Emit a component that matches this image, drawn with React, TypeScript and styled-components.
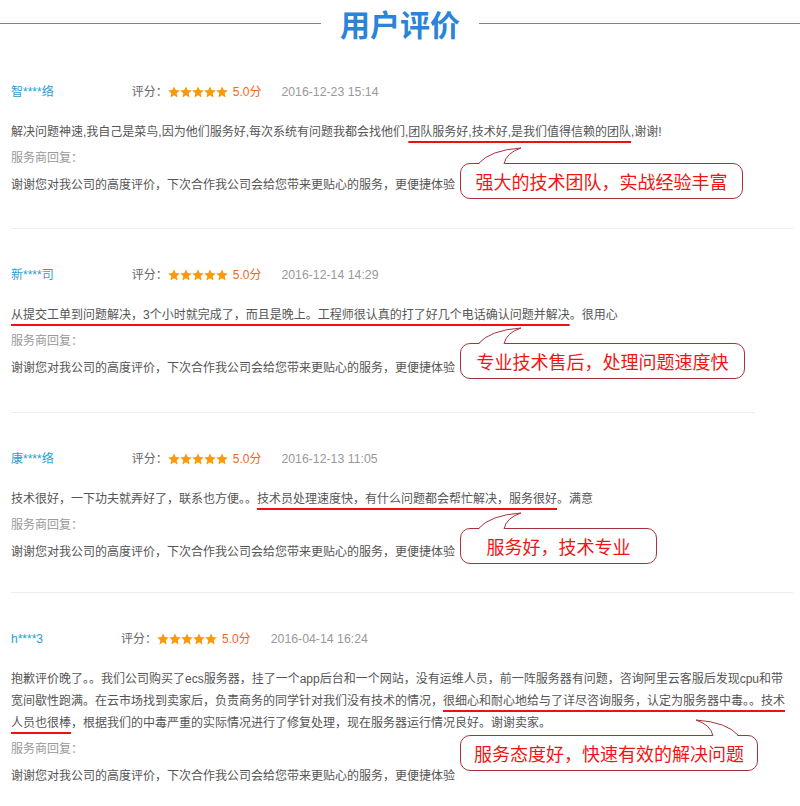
import React from "react";
import styled, { createGlobalStyle } from "styled-components";

const GlobalStyle = createGlobalStyle`
  html, body {
    margin: 0;
    padding: 0;
    background: #ffffff;
  }
  body {
    font-family: "Liberation Sans", "Noto Sans CJK SC", sans-serif;
    font-size: 12px;
    color: #555;
  }
`;

const Page = styled.div`
  width: 800px;
  background: #fff;
`;

const TitleBar = styled.header`
  display: flex;
  align-items: center;
  height: 46px;
  gap: 19px;
`;

const Rule = styled.div`
  flex: 1;
  height: 1px;
  background: #57a24d;
`;

const Title = styled.h1`
  margin: 0;
  font-family: "Noto Sans CJK SC", sans-serif;
  font-size: 30px;
  font-weight: 700;
  line-height: 46px;
  color: #2b84d9;
`;

const Review = styled.section<{ $width?: number; $pb: number; $sep: boolean }>`
  position: relative;
  margin-left: 11px;
  width: ${(p) => (p.$width ? `${p.$width}px` : "auto")};
  padding: 36px 0 ${(p) => p.$pb}px;
  border-bottom: ${(p) => (p.$sep ? "1px solid #ededed" : "none")};
`;

const Header = styled.div`
  display: flex;
  align-items: center;
  height: 20px;
  line-height: 20px;
  font-size: 12px;
`;

const Name = styled.span`
  color: #1d9fd9;
  margin-right: 78px;
`;

const ScoreLabel = styled.span`
  color: #666;
`;

const Stars = styled.span`
  display: inline-flex;
`;

const ScoreValue = styled.span`
  color: #f5661f;
  margin-left: 5px;
`;

const DateText = styled.span`
  color: #999;
  margin-left: 20px;
  font-size: 12.3px;
`;

const Comment = styled.p`
  margin: 19px 0 0;
  line-height: 22px;
  font-size: 12px;
  color: #555;
  white-space: nowrap;
`;

const Mark = styled.span`
  text-decoration-line: underline;
  text-decoration-color: #ee1111;
  text-decoration-thickness: 2px;
  text-underline-offset: 5px;
`;

const ReplyLabel = styled.div`
  line-height: 30px;
  color: #999;
`;

const Reply = styled.div`
  line-height: 24px;
  color: #555;
`;

const Bubble = styled.div<{ $top: number; $width: number }>`
  position: absolute;
  left: 449px;
  top: ${(p) => p.$top}px;
  width: ${(p) => p.$width}px;
  height: 36px;
  box-sizing: border-box;
  border: 1px solid #a8323a;
  border-radius: 10px;
  background: #fff;
  display: flex;
  align-items: center;
  justify-content: center;
  font-family: "Noto Sans CJK SC", sans-serif;
  font-size: 18px;
  color: #f21414;
  line-height: 34px;
  white-space: nowrap;
`;

const TailSvg = styled.svg<{ $flip: boolean }>`
  position: absolute;
  top: -17px;
  left: ${(p) => (p.$flip ? 234 : 17)}px;
  width: 44px;
  height: 18px;
  overflow: visible;
  transform: ${(p) => (p.$flip ? "scaleX(-1)" : "none")};
`;

const Tail = ({ flip = false }: { flip?: boolean }) => (
  <TailSvg $flip={flip} viewBox="0 0 44 18">
    <path d="M0,18 Q12,3 43,1 Q28,6 26,18 Z" fill="#fff" />
    <path
      d="M0,17 Q12,3 43,1 Q28,6 26,17"
      fill="none"
      stroke="#a8323a"
      strokeWidth="1"
    />
  </TailSvg>
);

const Star = () => (
  <svg width="12" height="12" viewBox="0 0 12 12">
    <polygon
      points="6,0.4 7.7,4.1 11.8,4.5 8.7,7.3 9.6,11.5 6,9.3 2.4,11.5 3.3,7.3 0.2,4.5 4.3,4.1"
      fill="#f99a0b"
    />
  </svg>
);

type ReviewData = {
  name: string;
  date: string;
  comment: React.ReactNode;
  bubble: string;
  bubbleTop: number;
  bubbleWidth: number;
  flip?: boolean;
  width?: number;
  pb: number;
  sep: boolean;
};

const REPLY =
  "谢谢您对我公司的高度评价，下次合作我公司会给您带来更贴心的服务，更便捷体验";

const reviews: ReviewData[] = [
  {
    name: "智****络",
    date: "2016-12-23 15:14",
    comment: (
      <>
        解决问题神速,我自己是菜鸟,因为他们服务好,每次系统有问题我都会找他们,
        <Mark>团队服务好,技术好,是我们值得信赖的团队</Mark>,谢谢!
      </>
    ),
    bubble: "强大的技术团队，实战经验丰富",
    bubbleTop: 117,
    bubbleWidth: 283,
    width: 782,
    pb: 31,
    sep: true,
  },
  {
    name: "新****司",
    date: "2016-12-14 14:29",
    comment: (
      <>
        <Mark>
          从提交工单到问题解决，3个小时就完成了，而且是晚上。工程师很认真的打了好几个电话确认问题并解决
        </Mark>
        。很用心
      </>
    ),
    bubble: "专业技术售后，处理问题速度快",
    bubbleTop: 114,
    bubbleWidth: 285,
    width: 744,
    pb: 32,
    sep: true,
  },
  {
    name: "康****络",
    date: "2016-12-13 11:05",
    comment: (
      <>
        技术很好，一下功夫就弄好了，联系也方便。。
        <Mark>技术员处理速度快，有什么问题都会帮忙解决，服务很好</Mark>。满意
      </>
    ),
    bubble: "服务好，技术专业",
    bubbleTop: 115,
    bubbleWidth: 197,
    width: 782,
    pb: 28,
    sep: true,
  },
  {
    name: "h****3",
    date: "2016-04-14 16:24",
    comment: (
      <>
        抱歉评价晚了。。我们公司购买了ecs服务器，挂了一个app后台和一个网站，没有运维人员，前一阵服务器有问题，咨询阿里云客服后发现cpu和带
        <br />
        宽间歇性跑满。在云市场找到卖家后，负责商务的同学针对我们没有技术的情况，
        <Mark>很细心和耐心地给与了详尽咨询服务，认定为服务器中毒。。技术</Mark>
        <br />
        <Mark>人员也很棒</Mark>
        ，根据我们的中毒严重的实际情况进行了修复处理，现在服务器运行情况良好。谢谢卖家。
      </>
    ),
    bubble: "服务态度好，快速有效的解决问题",
    bubbleTop: 142,
    bubbleWidth: 298,
    flip: true,
    pb: 18,
    sep: false,
  },
];

export default function App() {
  return (
    <Page>
      <GlobalStyle />
      <TitleBar>
        <Rule />
        <Title>用户评价</Title>
        <Rule />
      </TitleBar>
      {reviews.map((r) => (
        <Review key={r.name} $width={r.width} $pb={r.pb} $sep={r.sep}>
          <Header>
            <Name>{r.name}</Name>
            <ScoreLabel>评分：</ScoreLabel>
            <Stars>
              <Star />
              <Star />
              <Star />
              <Star />
              <Star />
            </Stars>
            <ScoreValue>5.0分</ScoreValue>
            <DateText>{r.date}</DateText>
          </Header>
          <Comment>{r.comment}</Comment>
          <ReplyLabel>服务商回复：</ReplyLabel>
          <Reply>{REPLY}</Reply>
          <Bubble $top={r.bubbleTop} $width={r.bubbleWidth}>
            <Tail flip={r.flip} />
            {r.bubble}
          </Bubble>
        </Review>
      ))}
    </Page>
  );
}
